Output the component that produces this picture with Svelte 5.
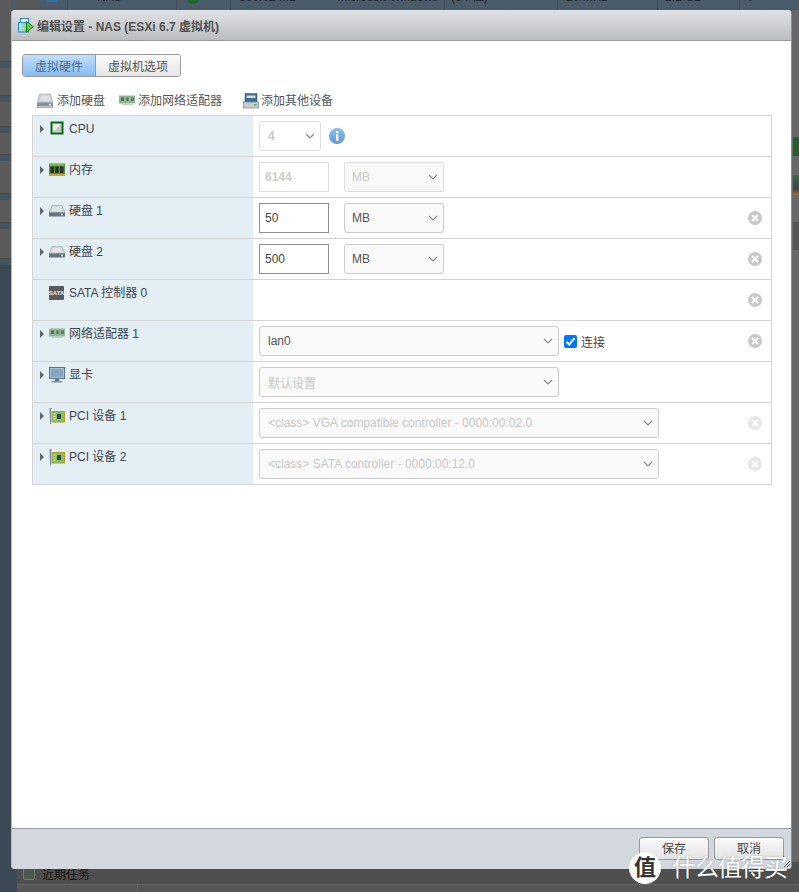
<script>
  const rows = [
    { label: 'CPU', icon: 'cpu', arrow: true },
    { label: '内存', icon: 'ram', arrow: true },
    { label: '硬盘 1', icon: 'disk', arrow: true, num: '50', del: 'on' },
    { label: '硬盘 2', icon: 'disk', arrow: true, num: '500', del: 'on' },
    { label: 'SATA 控制器 0', icon: 'sata', arrow: false, del: 'on' },
    { label: '网络适配器 1', icon: 'nic', arrow: true, del: 'on' },
    { label: '显卡', icon: 'mon', arrow: true },
    { label: 'PCI 设备 1', icon: 'pci', arrow: true, del: 'off', pci: '<class> VGA compatible controller - 0000:00:02.0' },
    { label: 'PCI 设备 2', icon: 'pci', arrow: true, del: 'off', pci: '<class> SATA controller - 0000:00:12.0' }
  ];
  const tiles = [62, 28, 25, 22, 33, 23, 30];
  const topCols = [
    { cls: 'c1', t: '' },
    { cls: 'c2', t: 'NAS' },
    { cls: 'c3', t: '' },
    { cls: 'c4', t: '300.02 MB', t2: 'Microsoft Windows' },
    { cls: 'c5', t: '(64 位)' },
    { cls: 'c6', t: '20 MHz' },
    { cls: 'c7', t: '2.1 GB' },
    { cls: 'c8', t: '0' }
  ];
</script>

{#snippet chev()}
  <svg class="chev" width="10" height="6" viewBox="0 0 10 6"><path d="M1 1l4 4 4-4" fill="none" stroke="#8a8a8a" stroke-width="1.2"/></svg>
{/snippet}

{#snippet icon(n)}
  {#if n === 'cpu'}
    <svg width="16" height="16" viewBox="0 0 16 16"><rect x="2.500" y="1.500" width="11" height="11" fill="#d9dcd6" stroke="#0a6a14" stroke-width="2"/><rect x="4" y="3" width="8" height="8" fill="#c6cac4"/><path d="M4 3h8L4 11z" fill="#eef0ec"/></svg>
  {:else if n === 'ram'}
    <svg width="16" height="16" viewBox="0 0 16 16"><rect x="0" y="1.500" width="16" height="11" fill="#4f9436"/><rect x="1" y="1.500" width="14" height="2" fill="#86c25f"/><rect x="1.500" y="4.500" width="3.500" height="6.500" fill="#2f2f2a"/><rect x="6.200" y="4.500" width="3.500" height="6.500" fill="#2f2f2a"/><rect x="11" y="4.500" width="3.500" height="6.500" fill="#2f2f2a"/><rect x="0" y="12" width="16" height="2" fill="#c3a534"/></svg>
  {:else if n === 'disk'}
    <svg width="16" height="16" viewBox="0 0 16 16"><path d="M3.200 2.500h9.600L16 9.500H0z" fill="#cfd6dd" stroke="#939ca5" stroke-width=".6"/><path d="M4 4h8l1.500 4H2.500z" fill="#dfe4e9"/><rect x="0" y="9.500" width="16" height="4" rx=".6" fill="#66727e"/><circle cx="13" cy="11.500" r="1" fill="#d8ecd8"/></svg>
  {:else if n === 'sata'}
    <svg width="16" height="16" viewBox="0 0 16 16"><rect x="0" y="1" width="15" height="14" rx="1" fill="#5a5a5a"/><text x="7.500" y="10.300" text-anchor="middle" font-size="6" font-weight="bold" fill="#f2f2f2" font-family="Liberation Sans">SATA</text></svg>
  {:else if n === 'nic'}
    <svg width="16" height="16" viewBox="0 0 16 16"><rect x="0" y="2.500" width="16" height="8" fill="#8fb792"/><rect x="2" y="4.500" width="3" height="3.500" fill="#5b6a5f"/><rect x="7.500" y="4.500" width="2" height="3.500" fill="#5b6a5f"/><rect x="12" y="4.500" width="3" height="3.500" fill="#6b7a70"/><rect x="3" y="10.500" width="11" height="1.500" fill="#c2cfba"/></svg>
  {:else if n === 'mon'}
    <svg width="16" height="16" viewBox="0 0 16 16"><rect x=".5" y=".5" width="15" height="11" fill="#a8c0d4" stroke="#5a7694"/><rect x="2" y="2" width="12" height="8" fill="#86a5bf"/><rect x="6" y="12" width="4" height="2" fill="#5a7694"/><rect x="3" y="14" width="10" height="1.500" fill="#7790aa"/></svg>
  {:else}
    <svg width="16" height="18" viewBox="0 0 16 18"><path d="M.5 0h2.200v1H2v15H1z" fill="#7f8aa5"/><rect x="3" y="3.500" width="12.500" height="10.500" fill="#7dc466" stroke="#b99a1f"/><rect x="8" y="6" width="4" height="5" fill="#444"/><path d="M4.500 6h2M4.500 8.500h2M4.500 11h2" stroke="#e8f0d0"/></svg>
  {/if}
{/snippet}

<div class="page">
  <div class="bgtop">
    <div class="gray"></div>
    {#each topCols as c, i}
      <div class="tcol {c.cls}">
        {#if i === 0}<i class="bl"></i>{/if}
        {#if i === 2}<i class="gr"></i>{/if}
        <span>{c.t}</span>
        {#if c.t2}<span class="second">{c.t2}</span>{/if}
      </div>
    {/each}
  </div>
  <div class="bgleft">
    {#each tiles as h}
      <div class="tile" style="height:{h}px"></div>
    {/each}
  </div>
  <div class="bgright">
    <i class="g1"></i><i class="g2"></i><i class="g3"></i>
  </div>
  <div class="bgbottom">
    <div class="recent">
      <span class="rico"></span><span class="rtext">近期任务</span>
    </div>
    <div class="nextrow"><div class="cellsep"></div></div>
  </div>

  <div class="dialog">
    <div class="head">
      <svg class="logo" width="16" height="16" viewBox="0 0 16 16"><defs><linearGradient id="lg" x1="0" y1="0" x2="1" y2="0"><stop offset="0" stop-color="#b6e6f5"/><stop offset="1" stop-color="#74d86a"/></linearGradient></defs><rect x="2.500" y=".5" width="8" height="8" fill="#eef7fc" stroke="#2a86c8"/><rect x=".5" y="4.500" width="10" height="9.500" fill="url(#lg)" stroke="#2a86c8"/><path d="M8.500 3.500l6.800 5.300-6.800 5.400z" fill="#62c94a" stroke="#1f7a1f"/></svg>
      <span class="title">编辑设置 - NAS (ESXi 6.7 虚拟机)</span>
    </div>
    <div class="body">
      <div class="tabs">
        <div class="tab active">虚拟硬件</div>
        <div class="tab">虚拟机选项</div>
      </div>
      <div class="toolbar">
        <span class="tool t1">
          <svg width="16" height="16" viewBox="0 0 16 16"><path d="M2.500 1h11L16 9.500H0z" fill="#c9cfd5" stroke="#a4abb2" stroke-width=".6"/><path d="M4 2.500h8l1.800 5.500H2.200z" fill="#dde1e5"/><rect x="0" y="9.500" width="16" height="5.500" rx=".8" fill="#87919b"/><rect x="1" y="13" width="14" height="1.500" fill="#c7ccd1"/><circle cx="13" cy="11.500" r="1" fill="#e4efe4"/></svg>
          添加硬盘</span>
        <span class="tool t2">{@render icon('nic')}添加网络适配器</span>
        <span class="tool t3">
          <svg width="16" height="16" viewBox="0 0 16 16"><rect x="2" y="0.500" width="12" height="9" fill="#3f6d96" stroke="#2f5675" stroke-width=".5"/><rect x="3.500" y="2.500" width="9" height="2.500" fill="#d6dee5"/><rect x=".5" y="9" width="15" height="6" fill="#c8cdd2" stroke="#7a838b" stroke-width=".7"/><rect x="11" y="11" width="2.500" height="1.500" fill="#5fa35f"/></svg>
          添加其他设备</span>
      </div>
      <div class="table">
        {#each rows as r, i}
          <div class="row">
            <div class="lab">
              <span class="arrow">{#if r.arrow}<i></i>{/if}</span>
              <span class="ico">{@render icon(r.icon)}</span>
              <span class="txt">{r.label}</span>
            </div>
            <div class="val">
              {#if i === 0}
                <div class="sel dis w62"><span>4</span>{@render chev()}</div>
                <svg class="info" width="16" height="16" viewBox="0 0 16 16"><defs><linearGradient id="ig" x1="0" y1="0" x2="0" y2="1"><stop offset="0" stop-color="#8ec0ee"/><stop offset="1" stop-color="#5a9ade"/></linearGradient></defs><circle cx="8" cy="8" r="8" fill="url(#ig)"/><rect x="7" y="3" width="2.400" height="2.200" fill="#fff"/><rect x="7" y="6.500" width="2.400" height="6.500" fill="#fff"/></svg>
              {:else if i === 1}
                <div class="inp dis">6144</div>
                <div class="sel dis w100"><span>MB</span>{@render chev()}</div>
              {:else if r.num}
                <div class="inp">{r.num}</div>
                <div class="sel w100"><span>MB</span>{@render chev()}</div>
              {:else if i === 5}
                <div class="sel w300"><span>lan0</span>{@render chev()}</div>
                <label class="chk"><span class="box"><svg width="13" height="13" viewBox="0 0 13 13"><path d="M2.500 6.800l2.700 2.800 5.300-6.400" fill="none" stroke="#fff" stroke-width="2"/></svg></span>连接</label>
              {:else if i === 6}
                <div class="sel dis2 w300"><span>默认设置</span>{@render chev()}</div>
              {:else if r.pci}
                <div class="sel dis2 w400"><span>{r.pci}</span>{@render chev()}</div>
              {/if}
              {#if r.del}
                <svg class="del" class:off={r.del === 'off'} width="14" height="14" viewBox="0 0 14 14"><circle cx="7" cy="7" r="7" fill="#c8c8c8"/><path d="M4 4l6 6M10 4l-6 6" stroke="#fff" stroke-width="1.900"/></svg>
              {/if}
            </div>
          </div>
        {/each}
      </div>
    </div>
    <div class="foot">
      <button class="btn">保存</button>
      <button class="btn">取消</button>
      <svg class="grip" width="6" height="6" viewBox="0 0 6 6"><path d="M0 6l6-6M3 6l3-3" stroke="#555" stroke-width="1"/></svg>
    </div>
  </div>
  <div class="mark">
    <span class="mk">值</span><span class="mt">什么值得买</span>
  </div>
</div>

<style>
  :global(body) { margin: 0; }
  .page { position: relative; width: 799px; height: 892px; overflow: hidden; background: #3c4853; font-family: "Liberation Sans", "Noto Sans CJK SC", sans-serif; font-size: 12px; color: #333; }

  .bgtop { position: absolute; left: 0; top: 0; width: 799px; height: 10px; display: flex; background: #4a5c6a; overflow: hidden; padding-left: 16px; box-sizing: border-box; }
  .gray { width: 22px; flex: none; background: #585858; }
  .tcol { flex: none; position: relative; box-sizing: border-box; border-right: 1px solid #3f4d58; font-size: 12px; color: #1c242a; line-height: 1; white-space: nowrap; overflow: hidden; }
  .tcol span { position: relative; top: -9px; }
  .tcol .second { margin-left: 37px; }
  .c1 { width: 30px; }
  .c2 { width: 109px; padding-left: 29px; }
  .c3 { width: 54px; }
  .c4 { width: 214px; padding-left: 8px; }
  .c5 { width: 113px; padding-left: 6px; }
  .c6 { width: 100px; padding-left: 8px; }
  .c7 { width: 82px; padding-left: 7px; }
  .c8 { width: 59px; padding-left: 7px; border-right: none; }
  .tcol .bl { position: absolute; left: 8px; top: 0; width: 12px; height: 2px; background: #2d6fa8; }
  .tcol .gr { position: absolute; left: 10px; top: -8px; width: 12px; height: 12px; border-radius: 50%; background: #1f6a2a; }

  .bgleft { position: absolute; left: 0; top: 0; width: 11px; height: 265px; display: flex; flex-direction: column; gap: 6px; background: #44555f; }
  .tile { background: #5b5b5b; flex: none; border-bottom: 1px solid #464646; box-sizing: border-box; }

  .bgright { position: absolute; left: 792px; top: 10px; width: 7px; height: 860px; background: #686868; }
  .bgright i { position: absolute; left: 1px; width: 6px; display: block; }
  .g1 { top: 127px; height: 19px; background: #25602a; }
  .g2 { top: 165px; height: 20px; background: linear-gradient(#3c6a3c, #38464f 70%, #b06a1e); }
  .g3 { top: 212px; height: 28px; background: #565656; }

  .bgbottom { position: absolute; left: 17px; top: 862px; width: 782px; height: 30px; background: #4f4f4f; display: flex; flex-direction: column; }
  .recent { display: flex; align-items: center; gap: 7px; padding-left: 6px; height: 23px; flex: none; box-sizing: border-box; padding-top: 0; border-bottom: 1px solid #666; color: #141414; font-size: 12px; }
  .rico { width: 12px; height: 12px; border: 1px solid #777; border-radius: 2px; box-sizing: border-box; background: #4a5a4a; margin-top: 2px; }
  .rtext { margin-top: 1px; }
  .nextrow { flex: 1; background: #565656; }
  .cellsep { width: 1px; height: 100%; margin-left: 120px; background: #666; }

  .dialog { position: absolute; left: 11px; top: 10px; width: 781px; height: 859px; display: flex; flex-direction: column; box-sizing: border-box; border-radius: 3px; overflow: hidden; border-left: 1px solid #bbb; border-right: 1px solid #8c8c8c; }
  .head { height: 31px; flex: none; box-sizing: border-box; display: flex; align-items: center; padding-left: 6px; gap: 3px; background: linear-gradient(#e1e2e6, #bcbdbf); border-bottom: 1px solid #999; }
  .logo { margin-top: 1px; }
  .title { font-size: 12px; font-weight: bold; color: #505050; }
  .body { flex: 1; background: #fff; padding: 13px 19px 0 10px; }
  .tabs { display: flex; width: 159px; height: 23px; box-sizing: border-box; border: 1px solid #999; border-radius: 3px; overflow: hidden; }
  .tab { display: flex; align-items: center; justify-content: center; background: linear-gradient(#fafafa, #e6e6e6); color: #555; flex: 1; }
  .tab.active { flex: none; width: 73px; box-sizing: border-box; background: linear-gradient(#c2dffb, #86bbf3); border-right: 1px solid #999; color: #4a6a90; }
  .toolbar { display: flex; align-items: center; height: 16px; margin-top: 16px; padding-left: 15px; color: #555; }
  .tool { display: flex; align-items: center; line-height: 14px; }
  .t1 { gap: 4px; margin-right: 14px; }
  .t2 { gap: 3px; margin-right: 21px; }
  .t3 { gap: 2px; }
  .table { margin: 6px 0 0 10px; width: 740px; box-sizing: border-box; border: 1px solid #d4d4d4; }
  .row { display: flex; height: 41px; box-sizing: border-box; border-bottom: 1px solid #d4d4d4; }
  .row:last-child { border-bottom: none; height: 40px; }
  .lab { width: 220px; flex: none; background: #e3eef5; display: flex; align-items: flex-start; padding-top: 5px; box-sizing: border-box; }
  .arrow { width: 16px; height: 16px; flex: none; display: flex; align-items: center; justify-content: flex-end; padding-right: 5px; box-sizing: border-box; }
  .arrow i { display: block; width: 0; height: 0; border-left: 4px solid #666; border-top: 4px solid transparent; border-bottom: 4px solid transparent; }
  .ico { width: 16px; height: 16px; flex: none; display: block; }
  .ico svg { display: block; }
  .txt { margin-left: 4px; line-height: 16px; color: #3f454d; }
  .val { flex: 1; position: relative; display: flex; align-items: center; padding-left: 6px; gap: 15px; }
  .sel { height: 30px; box-sizing: border-box; border: 1px solid #ccc; border-radius: 3px; background: #fafafa; display: flex; align-items: center; justify-content: space-between; padding: 0 5px 0 8px; color: #555; }
  .sel.dis { background: #fff; color: #c8c8c8; border-color: #ddd; }
  .sel.dis.w62 { font-weight: bold; }
  .sel.dis.w100 { background: #f9f9f9; }
  .sel.w100 { padding-left: 7px; }
  .sel.dis2 { color: #c8c8c8; background: #fafafa; font-weight: normal; }
  .w62 { width: 62px; }
  .w100 { width: 100px; }
  .w300 { width: 300px; }
  .w400 { width: 400px; }
  .inp { width: 70px; height: 30px; box-sizing: border-box; border: 1px solid #8f8f8f; display: flex; align-items: center; padding-left: 5px; color: #444; background: #fff; }
  .inp.dis { border-color: #ddd; color: #ccc; font-weight: bold; }
  .chev { flex: none; }
  .info { margin-left: -7px; }
  .chk { display: flex; align-items: center; gap: 4px; margin-left: -10px; color: #444; }
  .box { width: 13px; height: 13px; border-radius: 2px; background: #0075ff; display: block; }
  .box svg { display: block; }
  .del { position: absolute; right: 9.500px; top: 13px; }
  .del.off { opacity: .45; }
  .foot { position: relative; height: 41px; flex: none; box-sizing: border-box; background: #d3d8df; border-top: 1px solid #999; display: flex; justify-content: flex-end; align-items: flex-start; padding: 8px 7px 0 0; gap: 5px; }
  .btn { width: 70px; height: 23px; padding: 0 0 2px; border: 1px solid #999; border-radius: 3px; background: linear-gradient(#fafafa, #e2e2e2); font: 12px "Liberation Sans", "Noto Sans CJK SC", sans-serif; color: #444; }
  .grip { position: absolute; right: 1px; bottom: 2px; }
  .mark { position: absolute; left: 629px; top: 852px; display: flex; align-items: center; gap: 11px; color: #fff; text-shadow: 0 0 2px rgba(0,0,0,.3); }
  .mk { width: 32px; height: 32px; border-radius: 50%; background: #fff; color: #333; font-size: 22px; text-align: center; line-height: 32px; font-weight: bold; text-shadow: none; }
  .mt { font-size: 24px; line-height: 26px; letter-spacing: -1px; }
</style>
